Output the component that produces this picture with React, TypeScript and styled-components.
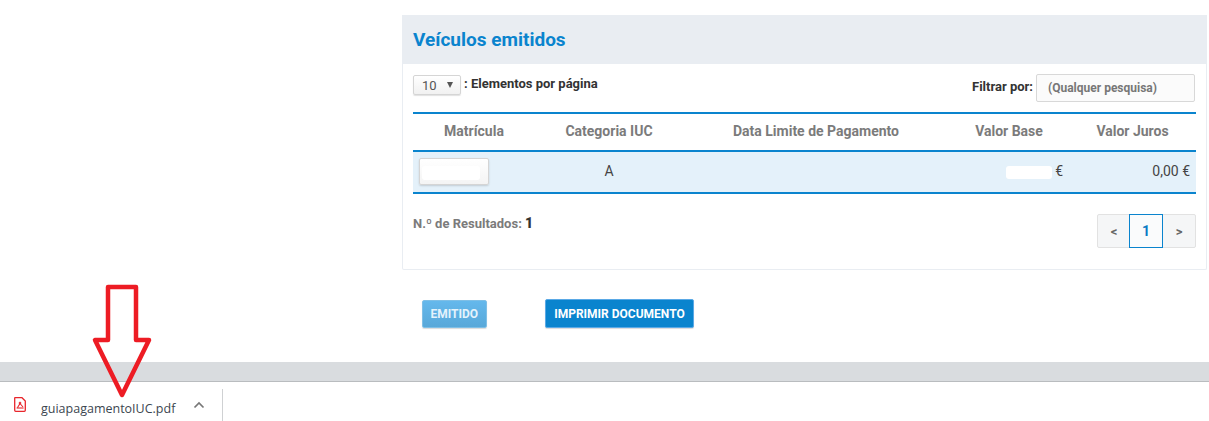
import React from 'react'
import styled, { createGlobalStyle } from 'styled-components'

const GlobalStyle = createGlobalStyle`
  html, body {
    margin: 0;
    padding: 0;
    background: #fff;
    font-family: Roboto, "Liberation Sans", sans-serif;
  }
`

const Page = styled.div`
  position: relative;
  width: 1209px;
  height: 421px;
  overflow: hidden;
  display: flex;
  flex-direction: column;
`

const Content = styled.main`
  flex: 1;
  padding: 15px 2px 0 402px;
`

const Panel = styled.section`
  height: 255px;
  box-sizing: border-box;
  border: 1px solid #e9edf2;
  border-top: 0;
  border-radius: 2px;
`

const PanelHeader = styled.header`
  height: 49px;
  margin: 0 -1px;
  padding: 0 11px;
  display: flex;
  align-items: center;
  background: #e9edf2;
`

const Title = styled.h2`
  margin: 0;
  font-size: 19px;
  font-weight: 700;
  color: #0a84ce;
`

const PanelBody = styled.div`
  padding: 0 10px;
`

const Controls = styled.div`
  height: 48px;
  display: flex;
  justify-content: space-between;
`

const PageSize = styled.div`
  padding-top: 11px;
  display: flex;
  align-items: flex-start;
  gap: 3px;
`

const SelectBox = styled.div`
  width: 48px;
  height: 20px;
  box-sizing: border-box;
  padding: 0 7px 0 8px;
  display: flex;
  align-items: center;
  justify-content: space-between;
  border: 1px solid #d5d5d5;
  border-radius: 2px;
  background: linear-gradient(#fff, #f1f1f1);
  box-shadow: 0 1px 1px rgba(0, 0, 0, 0.12);
  font-size: 13px;
  color: #555;
`

const Caret = styled.span`
  width: 0;
  height: 0;
  border-left: 3px solid transparent;
  border-right: 3px solid transparent;
  border-top: 6px solid #555;
`

const ControlLabel = styled.span`
  font-size: 13px;
  font-weight: 700;
  color: #333;
  line-height: 18px;
`

const FilterGroup = styled.div`
  padding: 10px 1px 0 0;
  display: flex;
  align-items: flex-start;
  gap: 3px;

  ${ControlLabel} {
    line-height: 25px;
  }
`

const FilterInput = styled.div`
  width: 159px;
  height: 28px;
  box-sizing: border-box;
  padding-left: 11px;
  display: flex;
  align-items: center;
  border: 1px solid #d8d8d8;
  border-radius: 2px;
  background: #fbfbfb;
  font-size: 12px;
  font-weight: 700;
  color: #777;
`

const Table = styled.table`
  width: 783px;
  table-layout: fixed;
  border-collapse: collapse;
  border-top: 2px solid #0a84ce;
  border-bottom: 2px solid #0a84ce;
`

const HeadCell = styled.th`
  height: 34px;
  padding: 0 0 2px;
  border-bottom: 2px solid #0a84ce;
  text-align: center;
  font-size: 14px;
  font-weight: 700;
  color: #7b7b7b;
`

const Row = styled.tr`
  background: #e4f1fa;
`

const Cell = styled.td<{ $align?: string }>`
  height: 42px;
  box-sizing: border-box;
  padding: 0 6px 2px;
  text-align: ${p => p.$align || 'center'};
  font-size: 14px;
  color: #444;
`

const PlateButton = styled.div`
  width: 70px;
  height: 27px;
  box-sizing: border-box;
  padding: 5px 8px 5px 2px;
  border: 1px solid #d5d5d5;
  border-radius: 2px;
  background: linear-gradient(#fff, #f4f4f4);
  box-shadow: 0 1px 2px rgba(0, 0, 0, 0.15);
`

const Hidden = styled.span<{ $w: number; $h: number }>`
  display: inline-block;
  width: ${p => p.$w}px;
  height: ${p => p.$h}px;
  background: #fff;
  border-radius: 3px;
  vertical-align: middle;
`

const Footer = styled.div`
  padding-top: 20px;
  display: flex;
  justify-content: space-between;
  align-items: flex-start;
`

const Results = styled.span`
  margin-top: 1px;
  font-size: 13px;
  font-weight: 700;
  color: #7b7b7b;

  b {
    color: #333;
    font-size: 14px;
  }
`

const Pager = styled.div`
  width: 99px;
  height: 34px;
  box-sizing: border-box;
  display: flex;
  border: 1px solid #e2e2e2;
  border-radius: 2px;
  background: #f5f6f7;
`

const PagerItem = styled.span<{ $active?: boolean }>`
  flex: ${p => (p.$active ? '0 0 34px' : '1')};
  margin: ${p => (p.$active ? '-1px 0 -1px -1px' : '0')};
  display: flex;
  align-items: center;
  justify-content: center;
  border: ${p => (p.$active ? '1px solid #0a84ce' : '0')};
  box-sizing: border-box;
  background: ${p => (p.$active ? '#fafbfc' : 'transparent')};
  font-size: ${p => (p.$active ? '14px' : '13px')};
  font-weight: 700;
  color: ${p => (p.$active ? '#0a7cc4' : '#666')};
`

const Actions = styled.div`
  padding: 29px 0 0 20px;
  display: flex;
  align-items: center;
  gap: 58px;
`

const ActionButton = styled.button<{ $light?: boolean }>`
  height: ${p => (p.$light ? '28px' : '29px')};
  padding: 0 ${p => (p.$light ? '7.5px' : '8.5px')};
  border: 1px solid ${p => (p.$light ? '#7fbfe6' : '#5aa9e6')};
  border-radius: 2px;
  background: ${p => (p.$light ? 'linear-gradient(#64b8ec, #58a8d9)' : '#0a84ce')};
  box-shadow: 0 1px 1px rgba(0, 0, 0, 0.15);
  font-family: inherit;
  font-size: 12px;
  font-weight: 700;
  color: ${p => (p.$light ? '#e4f3fc' : '#fff')};
`

const Band = styled.div`
  height: 19px;
  background: #d9dcdf;
`

const DownloadBar = styled.footer`
  height: 40px;
  box-sizing: border-box;
  border-top: 1px solid #b9bcbf;
  padding-left: 14px;
  display: flex;
  align-items: flex-start;
  background: #fff;
`

const PdfIcon = styled.svg`
  margin-top: 15px;
  flex: none;
`

const FileName = styled.span`
  margin: 19px 0 0 15px;
  font-family: "Open Sans", "Liberation Sans", sans-serif;
  font-size: 12.5px;
  line-height: 16px;
  color: #3c4650;
`

const Chevron = styled.svg`
  margin: 19px 0 0 18px;
  flex: none;
`

const BarDivider = styled.span`
  margin: 7px 0 0 17px;
  width: 1px;
  height: 33px;
  background: #cfd1d3;
`

const RedArrow = styled.svg`
  position: absolute;
  left: 90px;
  top: 283px;
`

const columns = [
  { label: 'Matrícula', width: 122 },
  { label: 'Categoria IUC', width: 148 },
  { label: 'Data Limite de Pagamento', width: 266 },
  { label: 'Valor Base', width: 120 },
  { label: 'Valor Juros', width: 127 }
]

export default function App() {
  return (
    <Page>
      <GlobalStyle />
      <Content>
        <Panel>
          <PanelHeader>
            <Title>Veículos emitidos</Title>
          </PanelHeader>
          <PanelBody>
            <Controls>
              <PageSize>
                <SelectBox>
                  10 <Caret />
                </SelectBox>
                <ControlLabel>: Elementos por página</ControlLabel>
              </PageSize>
              <FilterGroup>
                <ControlLabel>Filtrar por:</ControlLabel>
                <FilterInput>(Qualquer pesquisa)</FilterInput>
              </FilterGroup>
            </Controls>
            <Table>
              <colgroup>
                {columns.map(c => (
                  <col key={c.label} width={c.width} />
                ))}
              </colgroup>
              <thead>
                <tr>
                  {columns.map(c => (
                    <HeadCell key={c.label}>{c.label}</HeadCell>
                  ))}
                </tr>
              </thead>
              <tbody>
                <Row>
                  <Cell $align="left">
                    <PlateButton>
                      <Hidden $w={58} $h={14} />
                    </PlateButton>
                  </Cell>
                  <Cell>A</Cell>
                  <Cell />
                  <Cell $align="right">
                    <Hidden $w={46} $h={13} /> €
                  </Cell>
                  <Cell $align="right">0,00 €</Cell>
                </Row>
              </tbody>
            </Table>
            <Footer>
              <Results>
                N.º de Resultados: <b>1</b>
              </Results>
              <Pager>
                <PagerItem>&lt;</PagerItem>
                <PagerItem $active>1</PagerItem>
                <PagerItem>&gt;</PagerItem>
              </Pager>
            </Footer>
          </PanelBody>
        </Panel>
        <Actions>
          <ActionButton $light>EMITIDO</ActionButton>
          <ActionButton>IMPRIMIR DOCUMENTO</ActionButton>
        </Actions>
      </Content>
      <Band />
      <DownloadBar>
        <PdfIcon width="12" height="15" viewBox="0 0 12 15" fill="none" stroke="#e8262c">
          <path d="M1 0.7H8L11.3 4V13.3A1 1 0 0 1 10.3 14.3H1.7A1 1 0 0 1 0.7 13.3V1Z" strokeWidth="1.3" />
          <circle cx="6" cy="6" r="1" fill="#e8262c" strokeWidth="0.6" />
          <path d="M6 6.5L3.4 10.8M6 6.5L9 10" strokeWidth="1.1" />
          <path d="M2.6 11H9.6" strokeWidth="1.1" />
        </PdfIcon>
        <FileName>guiapagamentoIUC.pdf</FileName>
        <Chevron width="12" height="8" viewBox="0 0 12 8" fill="none" stroke="#777" strokeWidth="1.7">
          <path d="M1.5 6.5L6 2L10.5 6.5" />
        </Chevron>
        <BarDivider />
      </DownloadBar>
      <RedArrow width="64" height="116" viewBox="0 0 64 116" fill="none">
        <path
          d="M18 4H46V57H59L32 112L5 57H18Z"
          stroke="#ed1c24"
          strokeWidth="4.5"
          strokeLinejoin="round"
        />
      </RedArrow>
    </Page>
  )
}
